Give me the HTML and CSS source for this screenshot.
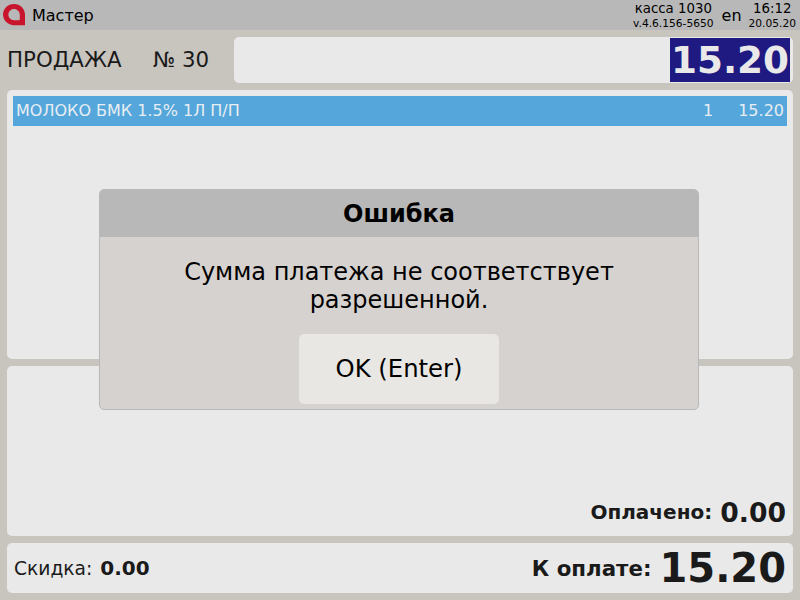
FILE: index.html
```html
<!DOCTYPE html>
<html>

<head>
    <meta charset="UTF-8">
    <meta name="viewport" content="width=device-width, initial-scale=1.0">
    <title>Мастер</title>
    <link rel="stylesheet" href="styles.css">
</head>

<body>
    <div class="header">
        <svg class="header__logo" width="22" height="22" viewBox="0 0 22 22">
            <path fill-rule="evenodd" fill="#c8142c"
                d="M11 0C4.9 0 0 4.8 0 10.6C0 16.4 4.9 21.2 11 21.2H22V10.6C22 4.8 17.1 0 11 0ZM11 5C7.9 5 5.4 7.5 5.4 10.6C5.4 13.7 7.9 16.2 11 16.2H15.8C16.4 16.2 16.8 15.8 16.8 15.2V10.6C16.8 7.5 14.1 5 11 5Z" />
        </svg>
        <div class="header__title">Мастер</div>
        <div class="header__kassa">
            <div class="header__kassa__name">касса 1030</div>
            <div class="header__small">v.4.6.156-5650</div>
        </div>
        <div class="header__lang">en</div>
        <div class="header__clock">
            <div class="header__clock__time">16:12</div>
            <div class="header__small">20.05.20</div>
        </div>
    </div>

    <div class="sale">
        <div class="sale__title">ПРОДАЖА</div>
        <div class="sale__number">№ 30</div>
        <div class="sale__price">
            <div class="sale__price__value">15.20</div>
        </div>
    </div>

    <div class="panel panel--list">
        <div class="item">
            <div class="item__name">МОЛОКО БМК 1.5% 1Л П/П</div>
            <div class="item__count">1</div>
            <div class="item__sum">15.20</div>
        </div>
    </div>

    <div class="panel panel--paid">
        <span class="label">Оплачено:</span>
        <span class="paid__value">0.00</span>
    </div>

    <div class="panel panel--total">
        <span class="discount__label">Скидка:</span>
        <span class="discount__value">0.00</span>
        <span class="total__label">К оплате:</span>
        <span class="total__value">15.20</span>
    </div>

    <div class="dialog">
        <div class="dialog__title">Ошибка</div>
        <div class="dialog__text">Сумма платежа не соответствует<br>разрешенной.</div>
        <button class="dialog__button">OK (Enter)</button>
    </div>
</body>

</html>
```

FILE: styles.css
```css
*,
*::before,
*::after {
    box-sizing: border-box;
    margin: 0;
    padding: 0;
}

body {
    width: 800px;
    height: 600px;
    overflow: hidden;
    background-color: #c8c5bf;
    font-family: "DejaVu Sans", sans-serif;
    color: #1a1a1a;
}

.header {
    display: flex;
    align-items: center;
    height: 30px;
    padding: 0 4px 0 3px;
    background-color: #b8b8b8;
    color: #000;
}

.header__logo {
    margin-right: 7px;
}

.header__title {
    flex: 1;
    font-size: 16px;
}

.header__kassa,
.header__clock {
    align-self: flex-start;
    padding-top: 2px;
    text-align: center;
    line-height: 14px;
}

.header__kassa__name,
.header__clock__time {
    font-size: 13.33px;
}

.header__small {
    margin-top: 1px;
    font-size: 10.67px;
}

.header__lang {
    margin: 0 7px 0 8px;
    font-size: 16px;
}

.sale {
    display: flex;
    align-items: center;
    height: 46px;
    margin: 7px;
}

.sale__title {
    width: 146px;
    padding-bottom: 2px;
    font-size: 21.33px;
}

.sale__number {
    width: 81px;
    padding-bottom: 2px;
    font-size: 21.33px;
}

.sale__price {
    display: flex;
    flex: 1;
    justify-content: flex-end;
    height: 46px;
    padding: 1px 3px 1px 0;
    border-radius: 5px;
    background-color: #e9e9e9;
}

.sale__price__value {
    width: 120px;
    background-color: #1e1a82;
    color: #e9e9e9;
    font-size: 37.33px;
    font-weight: bold;
    line-height: 44px;
    text-align: center;
}

.panel {
    margin: 0 7px 7px;
    border-radius: 5px;
    background-color: #e9e9e9;
}

.panel--list {
    height: 269px;
    padding: 6px;
}

.item {
    display: flex;
    align-items: center;
    height: 30px;
    padding: 0 3px 2px;
    background-color: #54a6db;
    color: #e8eef2;
    font-size: 16px;
}

.item__name {
    flex: 1;
}

.item__count {
    margin-right: 25px;
}

.panel--paid {
    display: flex;
    align-items: center;
    justify-content: flex-end;
    height: 170px;
    padding: 122px 7px 0 0;
}

.label {
    font-size: 20px;
    font-weight: bold;
}

.paid__value {
    margin-left: 8px;
    font-size: 26.67px;
    font-weight: bold;
}

.panel--total {
    display: flex;
    align-items: center;
    height: 50px;
    padding: 0 7px;
}

.discount__label {
    font-size: 18.67px;
}

.discount__value {
    margin-left: 8px;
    font-size: 20px;
    font-weight: bold;
}

.total__label {
    margin-left: auto;
    font-size: 21.33px;
    font-weight: bold;
}

.total__value {
    margin-left: 8px;
    font-size: 40px;
    font-weight: bold;
}

.dialog {
    position: absolute;
    top: 189px;
    left: 99px;
    display: flex;
    flex-direction: column;
    align-items: center;
    width: 600px;
    height: 221px;
    overflow: hidden;
    border: 1px solid #b8b8b8;
    border-radius: 5px;
    background-color: #d6d2cf;
    color: #000;
}

.dialog__title {
    width: 100%;
    height: 47px;
    background-color: #b8b8b8;
    font-size: 24px;
    font-weight: bold;
    line-height: 49px;
    text-align: center;
}

.dialog__text {
    margin-top: 21px;
    font-size: 24px;
    line-height: 28px;
    text-align: center;
}

.dialog__button {
    width: 200px;
    height: 70px;
    margin-top: 20px;
    padding-bottom: 2px;
    border: none;
    border-radius: 5px;
    background-color: #e8e7e3;
    color: #000;
    font-family: inherit;
    font-size: 24.3px;
}
```
